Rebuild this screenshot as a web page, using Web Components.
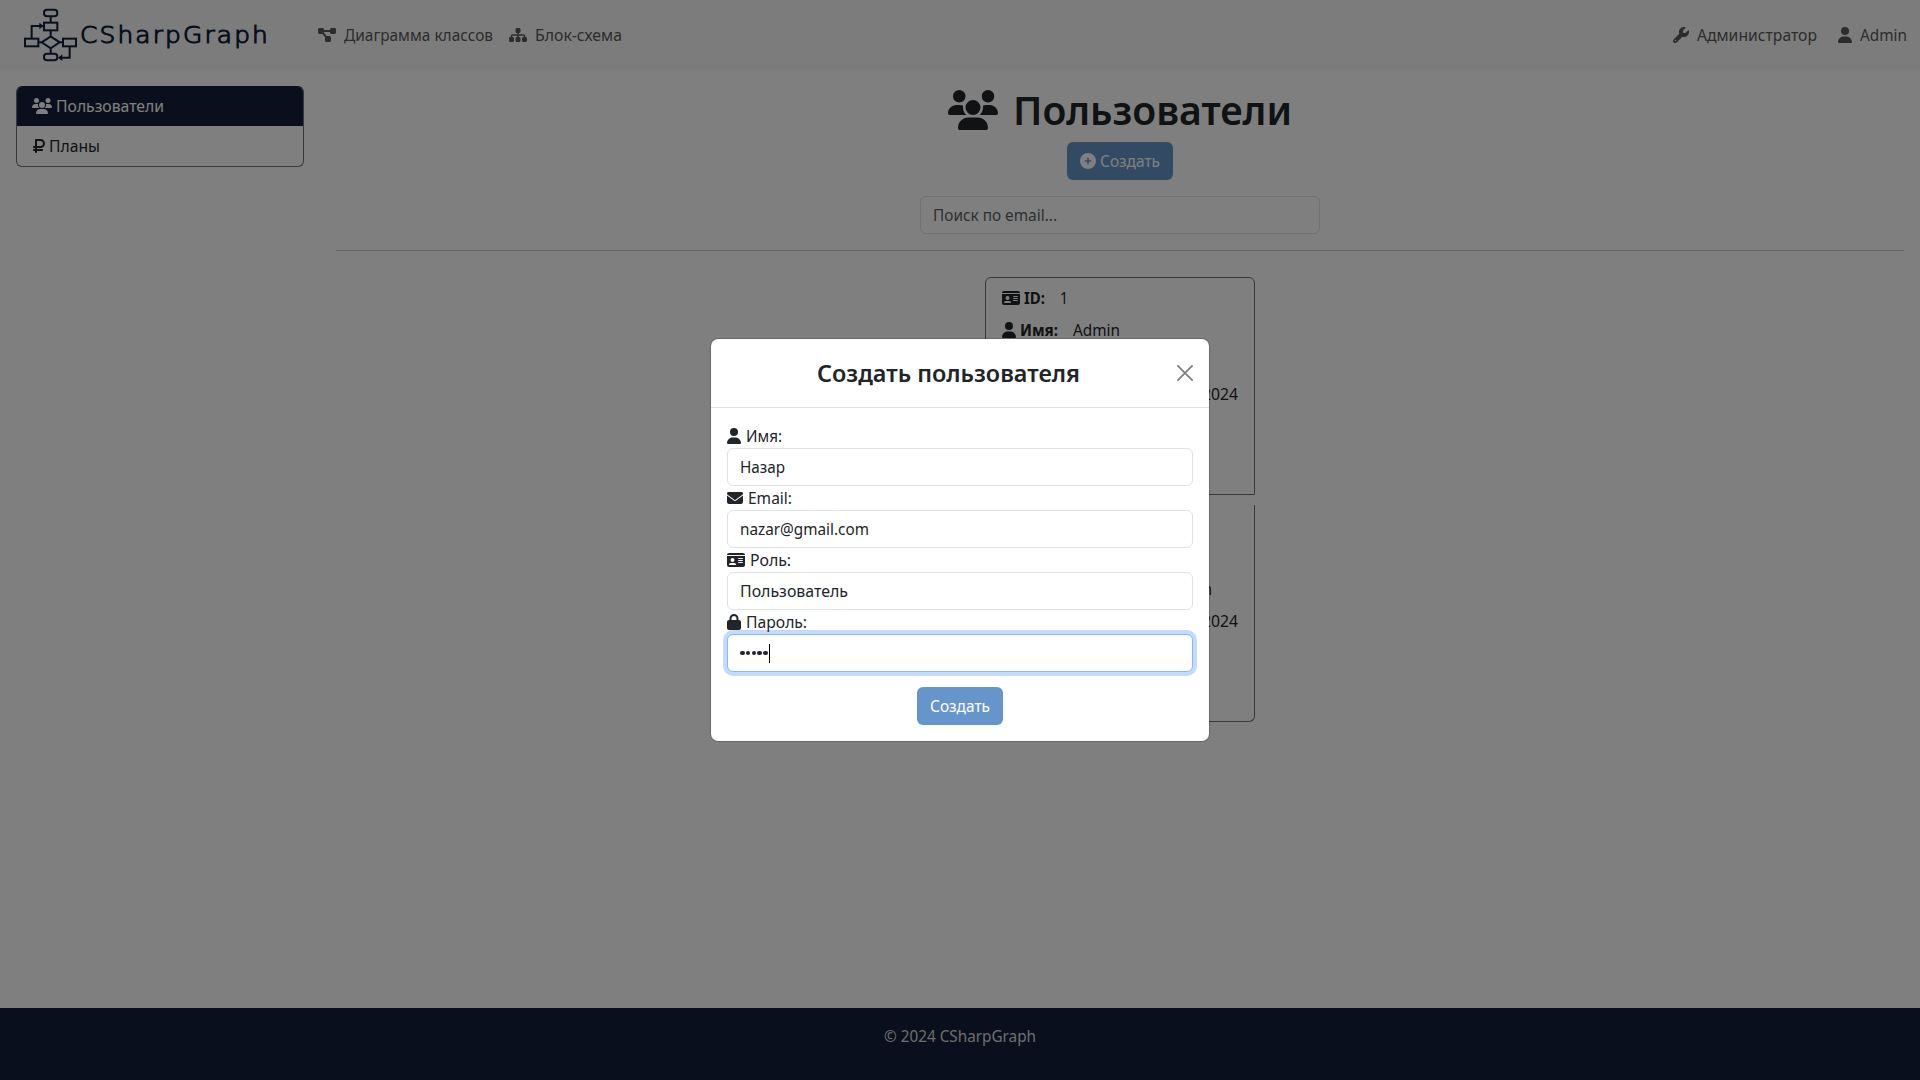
<!DOCTYPE html>
<html lang="ru">
<head>
<meta charset="utf-8">
<title>CSharpGraph</title>
<style>
html,body{margin:0;height:100%;overflow:hidden;background:#fff}
body{font:400 16px/24px "Noto Sans","Open Sans",sans-serif;color:#212529}
</style>
</head>
<body>
<graph-app></graph-app>
<script>
const ICONS={
user:[448,"M224 256A128 128 0 1 0 224 0a128 128 0 1 0 0 256zm-45.7 48C79.8 304 0 383.8 0 482.3C0 498.7 13.3 512 29.7 512H418.3c16.4 0 29.7-13.3 29.7-29.7C448 383.8 368.2 304 269.7 304H178.3z"],
users:[640,"M144 0a80 80 0 1 1 0 160A80 80 0 1 1 144 0zM512 0a80 80 0 1 1 0 160A80 80 0 1 1 512 0zM0 298.7C0 239.8 47.8 192 106.7 192h42.7c15.9 0 31 3.5 44.6 9.7c-1.3 7.2-1.9 14.7-1.9 22.3c0 38.2 16.8 72.5 43.3 96c-.2 0-.4 0-.7 0H21.3C9.6 320 0 310.4 0 298.7zM405.3 320c-.2 0-.4 0-.7 0c26.6-23.5 43.3-57.8 43.3-96c0-7.6-.7-15-1.9-22.3c13.6-6.3 28.7-9.7 44.6-9.7h42.7C592.2 192 640 239.8 640 298.7c0 11.8-9.6 21.3-21.3 21.3H405.3zM224 224a96 96 0 1 1 192 0 96 96 0 1 1 -192 0zM128 485.3C128 411.7 187.7 352 261.3 352H378.7C452.3 352 512 411.7 512 485.3c0 14.7-11.9 26.7-26.7 26.7H154.7c-14.7 0-26.7-11.9-26.7-26.7z"],
wrench:[512,"M352 320c88.4 0 160-71.6 160-160c0-15.3-2.2-30.1-6.2-44.2c-3.1-10.8-16.4-13.2-24.3-5.3l-76.8 76.8c-3 3-7.1 4.7-11.3 4.7H336c-8.8 0-16-7.2-16-16V118.6c0-4.2 1.7-8.3 4.7-11.3l76.8-76.8c7.9-7.9 5.4-21.2-5.3-24.3C382.1 2.2 367.3 0 352 0C263.6 0 192 71.6 192 160c0 19.1 3.4 37.5 9.5 54.5L19.9 396.1C7.2 408.8 0 426.1 0 444.1C0 481.6 30.4 512 67.9 512c18 0 35.3-7.2 48-19.9L297.5 310.5c17 6.2 35.4 9.5 54.5 9.5zM80 408a24 24 0 1 1 0 48 24 24 0 1 1 0-48z"],
diagram:[576,"M0 80C0 53.5 21.5 32 48 32h96c26.5 0 48 21.5 48 48V96H384V80c0-26.5 21.5-48 48-48h96c26.5 0 48 21.5 48 48v96c0 26.5-21.5 48-48 48H432c-26.5 0-48-21.5-48-48V160H192v16c0 1.7-.1 3.4-.3 5L272 288h96c26.5 0 48 21.5 48 48v96c0 26.5-21.5 48-48 48H272c-26.5 0-48-21.5-48-48V336c0-1.7 .1-3.4 .3-5L144 224H48c-26.5 0-48-21.5-48-48V80z"],
sitemap:[576,"M208 80c0-26.5 21.5-48 48-48h64c26.5 0 48 21.5 48 48v64c0 26.5-21.5 48-48 48h-8v40H464c30.9 0 56 25.1 56 56v32h8c26.5 0 48 21.5 48 48v64c0 26.5-21.5 48-48 48H464c-26.5 0-48-21.5-48-48V368c0-26.5 21.5-48 48-48h8V288c0-4.4-3.6-8-8-8H312v40h8c26.5 0 48 21.5 48 48v64c0 26.5-21.5 48-48 48H256c-26.5 0-48-21.5-48-48V368c0-26.5 21.5-48 48-48h8V280H112c-4.4 0-8 3.6-8 8v32h8c26.5 0 48 21.5 48 48v64c0 26.5-21.5 48-48 48H48c-26.5 0-48-21.5-48-48V368c0-26.5 21.5-48 48-48h8V288c0-30.9 25.1-56 56-56H264V192h-8c-26.5 0-48-21.5-48-48V80z"],
ruble:[384,"M96 32C78.3 32 64 46.3 64 64V256H32c-17.7 0-32 14.3-32 32s14.3 32 32 32H64v32H32c-17.7 0-32 14.3-32 32s14.3 32 32 32H64v32c0 17.7 14.3 32 32 32s32-14.3 32-32V416H288c17.7 0 32-14.3 32-32s-14.3-32-32-32H128V320H240c79.5 0 144-64.5 144-144s-64.5-144-144-144H96zM240 256H128V96H240c44.2 0 80 35.8 80 80s-35.8 80-80 80z"],
plus:[512,"M256 512A256 256 0 1 0 256 0a256 256 0 1 0 0 512zM232 344V280H168c-13.3 0-24-10.7-24-24s10.7-24 24-24h64V168c0-13.3 10.7-24 24-24s24 10.7 24 24v64h64c13.3 0 24 10.7 24 24s-10.7 24-24 24H280v64c0 13.3-10.7 24-24 24s-24-10.7-24-24z"],
idcard:[576,"M0 96l576 0c0-35.3-28.7-64-64-64H64C28.7 32 0 60.7 0 96zm0 32V416c0 35.3 28.7 64 64 64H512c35.3 0 64-28.7 64-64V128H0zM64 405.3c0-29.5 23.9-53.3 53.3-53.3H234.7c29.5 0 53.3 23.9 53.3 53.3c0 5.9-4.8 10.7-10.7 10.7H74.7c-5.9 0-10.7-4.8-10.7-10.7zM176 192a64 64 0 1 1 0 128 64 64 0 1 1 0-128zm176 16c0-8.8 7.2-16 16-16H496c8.8 0 16 7.2 16 16s-7.2 16-16 16H368c-8.8 0-16-7.2-16-16zm0 64c0-8.8 7.2-16 16-16H496c8.8 0 16 7.2 16 16s-7.2 16-16 16H368c-8.8 0-16-7.2-16-16zm0 64c0-8.8 7.2-16 16-16H496c8.8 0 16 7.2 16 16s-7.2 16-16 16H368c-8.8 0-16-7.2-16-16z"],
envelope:[512,"M48 64C21.5 64 0 85.5 0 112c0 15.1 7.1 29.3 19.2 38.4L236.8 313.6c11.4 8.5 27 8.5 38.4 0L492.8 150.4c12.1-9.1 19.2-23.3 19.2-38.4c0-26.5-21.5-48-48-48H48zM0 176V384c0 35.3 28.7 64 64 64H448c35.3 0 64-28.7 64-64V176L294.4 339.2c-22.8 17.1-54 17.1-76.8 0L0 176z"],
lock:[448,"M144 144v48H304V144c0-44.2-35.8-80-80-80s-80 35.8-80 80zM80 192V144C80 64.5 144.5 0 224 0s144 64.5 144 144v48h16c35.3 0 64 28.7 64 64V448c0 35.3-28.7 64-64 64H64c-35.3 0-64-28.7-64-64V256c0-35.3 28.7-64 64-64H80z"]
};
const define=(name,html,ready)=>customElements.define(name,class extends HTMLElement{
  constructor(){super();this.attachShadow({mode:"open"}).innerHTML=html;}
  connectedCallback(){ready&&ready(this,this.shadowRoot);}
});

/* Icon: name picks the glyph, size is its height */
define("g-icon",`<style>:host{display:block;flex:none}svg{display:block;fill:currentColor}</style><svg><path/></svg>`,(el,r)=>{
  const [w,d]=ICONS[el.getAttribute("name")],s=+(el.getAttribute("size")||16),svg=r.querySelector("svg");
  svg.setAttribute("viewBox",`0 0 ${w} 512`);svg.setAttribute("width",w/512*s);svg.setAttribute("height",s);
  r.querySelector("path").setAttribute("d",d);
});

/* One line of text set to an exact measure */
define("g-text",`<style>:host{display:block;flex:none;white-space:nowrap}span{display:inline-block;transform-origin:0 50%}</style><span><slot></slot></span>`,(el,r)=>{
  const w=+el.getAttribute("w"),s=r.querySelector("span");
  el.style.width=w+"px";
  s.style.transform=`scaleX(${w/s.getBoundingClientRect().width})`;
});

define("g-logo",`<style>
:host{display:flex;align-items:center;color:#121f38}
svg{display:block;flex:none}
g-text{font:200 23px/30px "DejaVu Sans",sans-serif;letter-spacing:2px;-webkit-text-stroke:1.1px #121f38;margin:-1px -2px 0 3px}
</style>
<svg width="53" height="54" viewBox="0 0 159 162" fill="none" stroke="currentColor" stroke-width="6">
<rect x="60" y="5" width="40" height="20" rx="9"/><rect x="60" y="44" width="40" height="23"/>
<rect x="3" y="92" width="40" height="23"/><rect x="117" y="92" width="39" height="23"/>
<rect x="60" y="137" width="40" height="20" rx="9"/>
<path d="M80 25v19M80 67v17M80 85l27 18-27 18-27-18zM43 103h10M107 103h10M80 121v16M23 92V54h29M137 115v34h-27"/>
<path fill="currentColor" stroke="none" d="M46 44l13 10-13 10zM115 139l-13 10 13 10z"/>
</svg><g-text w="190">CSharpGraph</g-text>`);

define("nav-link",`<style>:host{display:flex;align-items:center;gap:8px;color:#585959}</style><slot></slot>`);

define("top-nav",`<style>
:host{display:flex;align-items:center;height:70px;box-sizing:border-box;padding:0 13px 0 24px;background:#f8f9fa}
g-logo{margin-right:50px}
.left,.right{display:flex;gap:16px}.right{margin-left:auto;gap:21px}
</style><g-logo></g-logo>
<div class="left"><nav-link><g-icon name="diagram"></g-icon><g-text w="149">Диаграмма классов</g-text></nav-link>
<nav-link><g-icon name="sitemap"></g-icon><g-text w="87">Блок-схема</g-text></nav-link></div>
<div class="right"><nav-link><g-icon name="wrench"></g-icon><g-text w="120">Администратор</g-text></nav-link>
<nav-link><g-icon name="user"></g-icon><g-text w="47">Admin</g-text></nav-link></div>`);

define("side-menu",`<style>
:host{display:block;width:288px;flex:none;box-sizing:border-box;height:81px;border:1px solid #6c757d;border-color:#121f38 #6c757d #6c757d;border-radius:6px;overflow:hidden}
div{display:flex;align-items:center;gap:4px;height:40px;box-sizing:border-box;padding:0 15px}
.on{background:#121f38;color:#fff;height:39px;padding-bottom:1px}
.off{padding-left:16px}
</style><div class="on"><g-icon name="users"></g-icon><g-text w="108">Пользователи</g-text></div>
<div class="off"><g-icon name="ruble"></g-icon><g-text w="51">Планы</g-text></div>`);

define("g-button",`<style>:host{display:flex;align-items:center;justify-content:center;gap:4px;height:38px;box-sizing:border-box;padding:0 13px;border-radius:6px;background:#6695cb;color:#fff;width:max-content}</style><slot></slot>`);

define("g-input",`<style>
:host{display:flex;align-items:center;height:38px;box-sizing:border-box;padding:0 12px;border:1px solid #dee2e6;border-radius:6px;background:#fff}
:host([focused]){border-color:#86b7fe;box-shadow:0 0 0 4px #c2dbfe}
</style><slot></slot>`);

define("user-card",`<style>
:host{display:block;box-sizing:border-box;width:270px;height:218px;border:1px solid #6c757d;padding:4px 16px;color:#212529}
:host([first]){border-radius:6px 6px 0 0}
:host([last]){border-radius:0 0 6px 6px;border-top:0;height:217px}
::slotted(div){display:flex;align-items:center;height:32px;gap:4px}
</style><slot></slot>`);

define("page-main",`<style>
:host{display:flex;flex-direction:column;align-items:center;flex:1}
.title{display:flex;align-items:center;gap:15px;height:48px;font-size:40px;line-height:48px;font-weight:600}
.title g-icon{margin-top:-1px}
g-button{margin-top:8px}
.search{width:400px;margin:16px 0}
.search g-text{color:#5b5f64}
hr{width:100%;border:0;height:1px;background:#c8c9ca;margin:0 0 26px}
.cards{display:flex;flex-direction:column;gap:10px}
b{display:block}.v{margin-left:11px}.end{justify-content:flex-end}
.end.n{padding-right:26px}
</style>
<div class="title"><g-icon name="users" size="40"></g-icon><g-text w="279">Пользователи</g-text></div>
<g-button><g-icon name="plus"></g-icon><g-text w="60">Создать</g-text></g-button>
<g-input class="search"><g-text w="124">Поиск по email...</g-text></g-input>
<hr>
<div class="cards">
<user-card first><div><g-icon name="idcard"></g-icon><b><g-text w="21">ID:</g-text></b><g-text class="v" w="8">1</g-text></div>
<div><g-icon name="user"></g-icon><b><g-text w="38">Имя:</g-text></b><g-text class="v" w="47">Admin</g-text></div>
<div></div><div class="end"><g-text w="36">2024</g-text></div></user-card>
<user-card last><div></div><div></div><div class="end n"><g-text w="9">n</g-text></div><div class="end"><g-text w="36">2024</g-text></div></user-card>
</div>`);

define("form-field",`<style>
:host{display:block}
.l{display:flex;align-items:center;gap:5px;height:24px}
</style><div class="l"><slot name="label"></slot></div><slot></slot>`);

define("user-modal",`<style>
:host{display:flex;align-items:center;justify-content:center;position:absolute;inset:0;background:rgba(0,0,0,.5)}
.box{width:500px;height:404px;box-sizing:border-box;border:1px solid rgba(0,0,0,.18);border-radius:8px;background:#fff;background-clip:padding-box}
.head{display:flex;align-items:center;height:69px;box-sizing:border-box;border-bottom:1px solid #dee2e6;padding:0 16px 0 106px;justify-content:space-between}
.head g-text{font-size:24px;font-weight:600;line-height:32px}
.head svg{display:block}
.body{padding:16px 16px 0}
g-button{margin:15px auto 0}
.dots{display:flex;align-items:center;gap:1.2px}
.dots i{width:4.6px;height:4.6px;border-radius:50%;background:#212529}
.dots s{width:1px;height:19px;background:#000}
</style>
<div class="box"><div class="head"><g-text w="263">Создать пользователя</g-text>
<svg width="16" height="16" viewBox="0 0 16 16" stroke="#7f7f7f" stroke-width="1.8" stroke-linecap="round"><path d="M.9.9l14.2 14.2M15.1.9L.9 15.1"/></svg></div>
<div class="body">
<form-field><g-icon slot="label" name="user"></g-icon><g-text slot="label" w="36">Имя:</g-text><g-input><g-text w="45">Назар</g-text></g-input></form-field>
<form-field><g-icon slot="label" name="envelope"></g-icon><g-text slot="label" w="44">Email:</g-text><g-input><g-text w="129">nazar@gmail.com</g-text></g-input></form-field>
<form-field><g-icon slot="label" name="idcard"></g-icon><g-text slot="label" w="41">Роль:</g-text><g-input><g-text w="108">Пользователь</g-text></g-input></form-field>
<form-field><g-icon slot="label" name="lock"></g-icon><g-text slot="label" w="61">Пароль:</g-text><g-input focused><div class="dots"><i></i><i></i><i></i><i></i><i></i><s></s></div></g-input></form-field>
<g-button><g-text w="60">Создать</g-text></g-button>
</div></div>`);

define("page-footer",`<style>:host{display:flex;justify-content:center;height:72px;box-sizing:border-box;padding-top:16px;background:#121f38;color:#dcdddd}</style><g-text w="152">© 2024 CSharpGraph</g-text>`);

define("graph-app",`<style>
:host{display:flex;flex-direction:column;height:1080px;position:relative}
.content{display:flex;gap:32px;flex:1;padding:16px 16px 0}
</style><top-nav></top-nav><div class="content"><side-menu></side-menu><page-main></page-main></div><page-footer></page-footer><user-modal></user-modal>`);
</script>
</body>
</html>
